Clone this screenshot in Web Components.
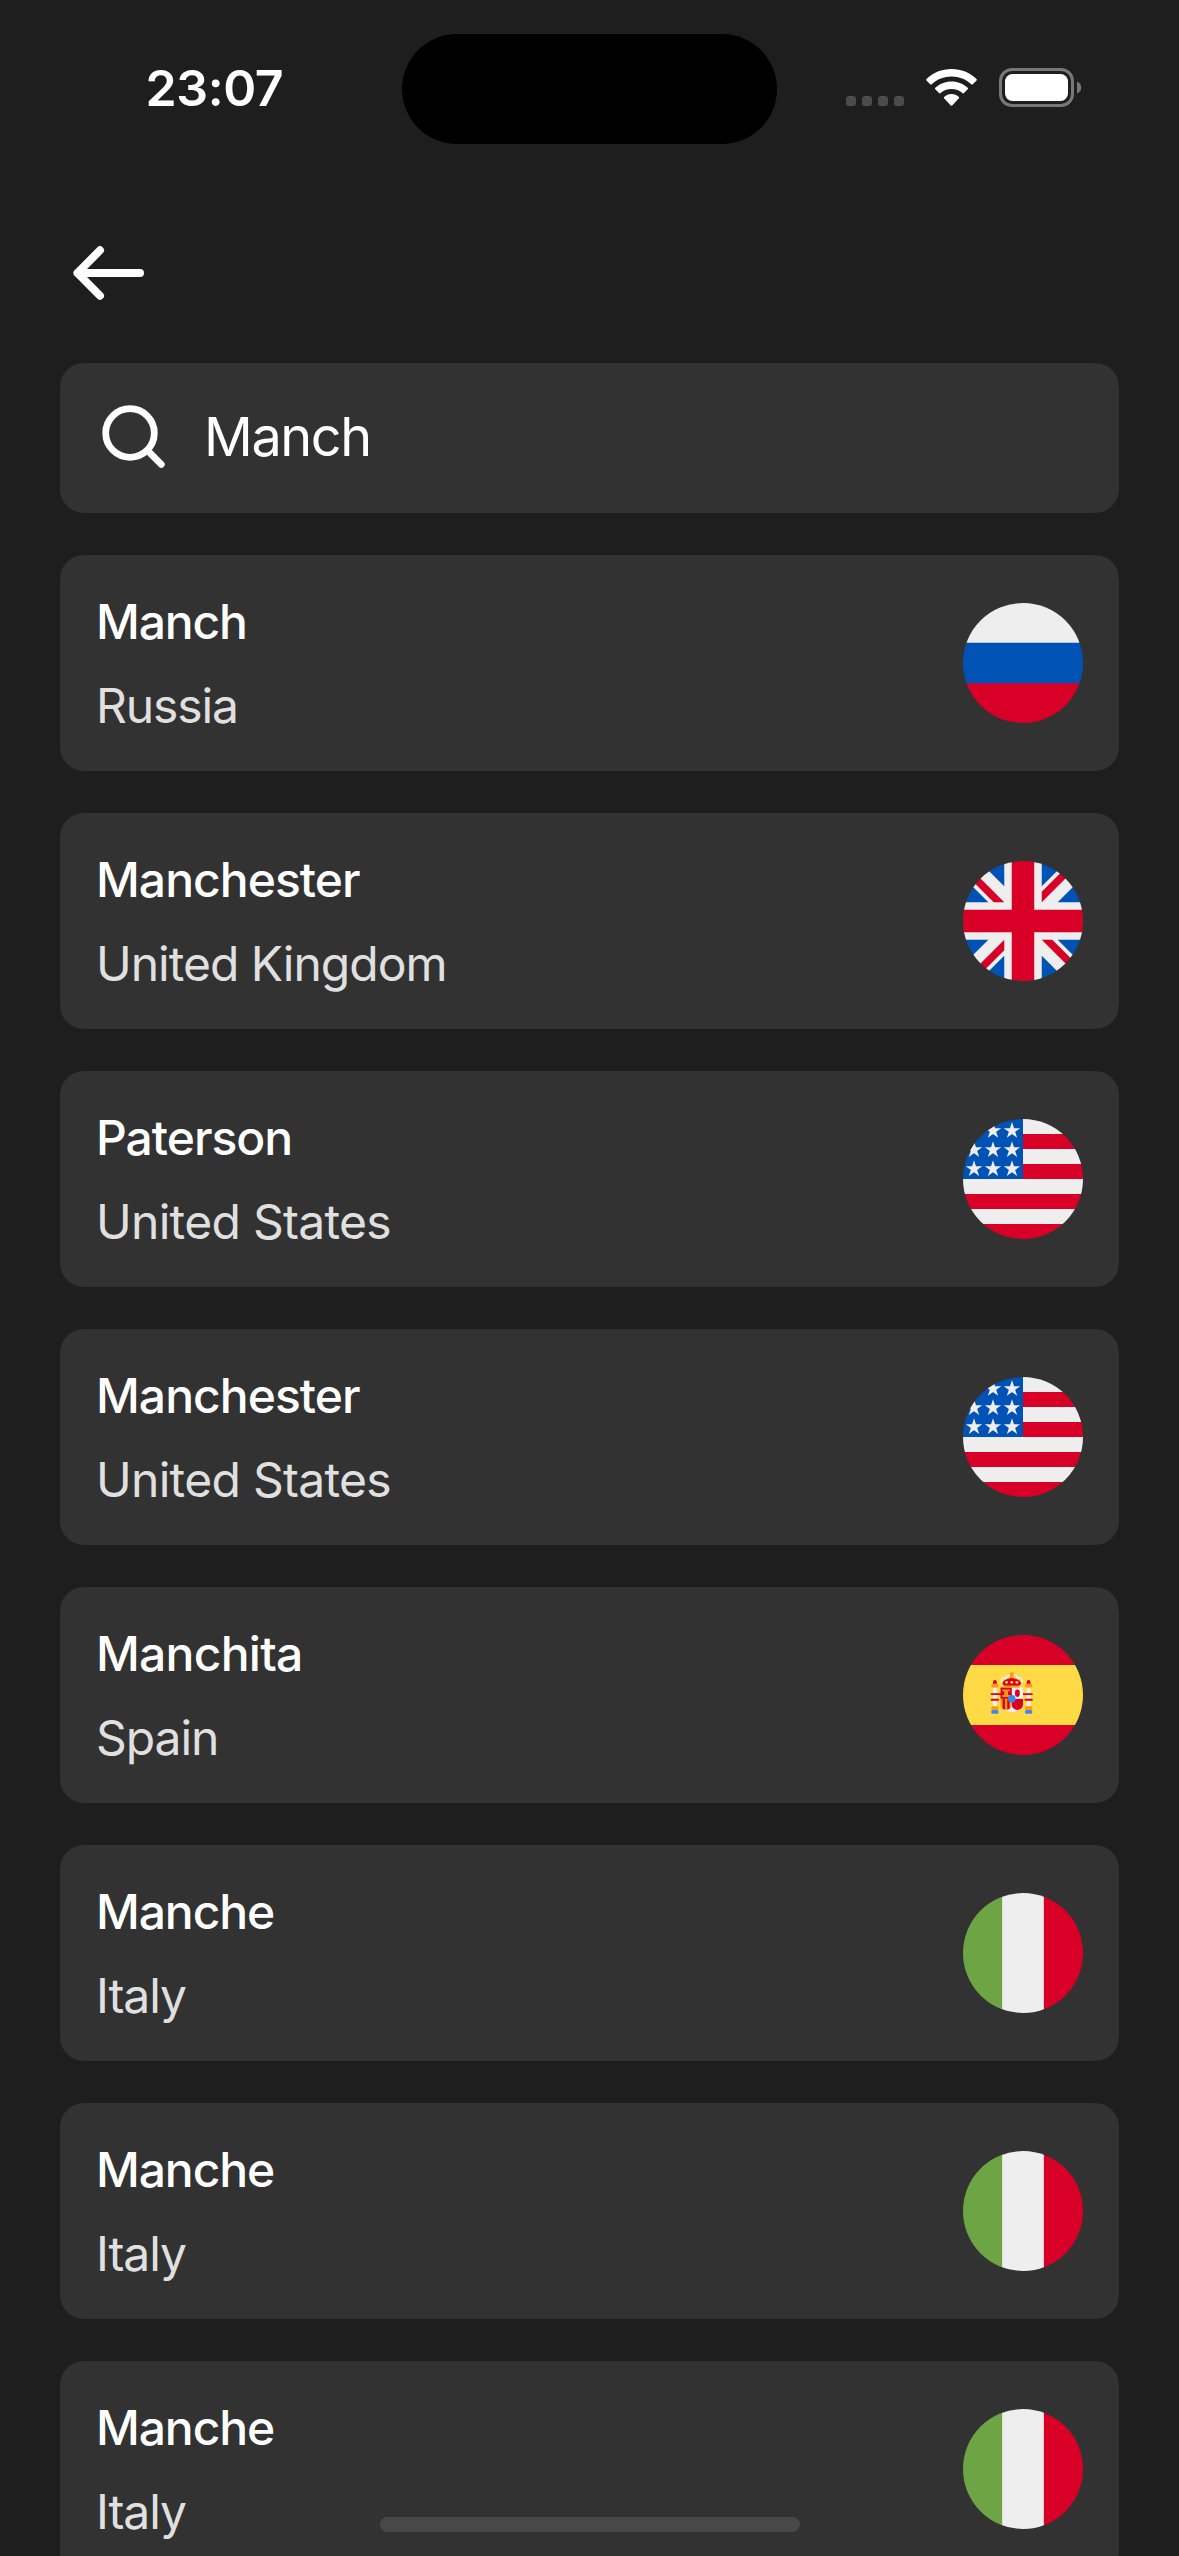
<!DOCTYPE html>
<html lang="en">
<head>
<meta charset="utf-8">
<title>City search</title>
<style>
  html, body { margin: 0; padding: 0; background: #1e1e1e; }
  body { height: 2556px; overflow: hidden; font-family: Inter, "Liberation Sans", sans-serif; color: #fff; }
</style>
</head>
<body>
<city-search-screen></city-search-screen>

<script>
const FLAGS = {
  ru: `<path fill="#0052b4" d="M512 170v172l-256 32L0 342V170l256-32z"/><path fill="#eee" d="M512 0v170H0V0Z"/><path fill="#d80027" d="M512 342v170H0V342Z"/>`,
  it: `<path fill="#eee" d="M167 0h178l25.9 252.3L345 512H167l-29.8-253.4z"/><path fill="#6da544" d="M0 0h167v512H0z"/><path fill="#d80027" d="M345 0h167v512H345z"/>`,
  gb: `<path fill="#eee" d="M0 0h512v512H0z"/><path fill="#0052b4" d="M336 0v108L444 0Zm176 68L404 176h108zM0 176h108L0 68ZM68 0l108 108V0Zm108 512V404L68 512ZM0 444l108-108H0Zm512-108H404l108 108Zm-68 176L336 404v108z"/><path fill="#d80027" d="M0 0v45l131 131h45L0 0zm208 0v208H0v96h208v208h96V304h208v-96H304V0h-96zm259 0L336 131v45L512 0h-45zM176 336 0 512h45l131-131v-45zm160 0 176 176v-45L381 336h-45z"/>`,
  us: `<path fill="#eee" d="M0 0h512v512H0z"/><path fill="#d80027" d="M224 64h288v64H224Zm0 128h288v64H256ZM0 320h512v64H0Zm0 128h512v64H0Z"/><path fill="#0052b4" d="M0 0h256v256H0Z"/><path fill="#eee" d="m187 243 57-41h-70l57 41-22-67zm-81 0 57-41H93l57 41-22-67zm-81 0 57-41H12l57 41-22-67zm162-81 57-41h-70l57 41-22-67zm-81 0 57-41H93l57 41-22-67zm-81 0 57-41H12l57 41-22-67Zm162-82 57-41h-70l57 41-22-67Zm-81 0 57-41H93l57 41-22-67zm-81 0 57-41H12l57 41-22-67Z"/>`,
  es: `<path fill="#ffda44" d="m0 128 256-32 256 32v256l-256 32L0 384Z"/><path fill="#d80027" d="M0 0h512v128H0zm0 384h512v128H0z"/><g fill="#eee"><path d="M144 304h-16v-80h16zm128 0h16v-80h-16z"/><ellipse cx="208" cy="296" rx="48" ry="32"/></g><g fill="#d80027"><rect width="16" height="24" x="128" y="192" rx="8"/><rect width="16" height="24" x="272" y="192" rx="8"/><path d="M208 272v24a24 24 0 0 0 24 24 24 24 0 0 0 24-24v-24h-24z"/></g><g fill="#ff9811"><rect width="32" height="16" x="120" y="208" rx="8"/><rect width="32" height="16" x="264" y="208" rx="8"/><rect width="32" height="16" x="120" y="304" rx="8"/><rect width="32" height="16" x="264" y="304" rx="8"/><path d="M160 272v24c0 8 4 14 9 19l5-6 5 10a21 21 0 0 0 10 0l5-10 5 6c6-5 9-11 9-19v-24h-9l-5 8-5-8h-10l-5 8-5-8z"/></g><path fill="#d80027" d="M122 248a4 4 0 0 0-4 4 4 4 0 0 0 4 4h172a4 4 0 0 0 4-4 4 4 0 0 0-4-4zm0 24a4 4 0 0 0-4 4 4 4 0 0 0 4 4h28a4 4 0 0 0 4-4 4 4 0 0 0-4-4zm144 0a4 4 0 0 0-4 4 4 4 0 0 0 4 4h28a4 4 0 0 0 4-4 4 4 0 0 0-4-4z"/><path fill="#eee" d="M196 168c-7 0-13 5-15 11l-5-1c-9 0-16 7-16 16s7 16 16 16c7 0 13-4 15-11a16 16 0 0 0 17-4 16 16 0 0 0 17 4 16 16 0 1 0 10-20 16 16 0 0 0-27-5c-3-4-7-6-12-6zm0 8c5 0 8 4 8 8 0 5-3 8-8 8-4 0-8-3-8-8 0-4 4-8 8-8zm24 0c5 0 8 4 8 8 0 5-3 8-8 8-4 0-8-3-8-8 0-4 4-8 8-8zm-44 10 4 1 4 8c0 4-4 7-8 7s-8-3-8-8c0-4 4-8 8-8zm64 0c5 0 8 4 8 8 0 5-3 8-8 8-4 0-8-3-8-7l4-8z"/><path fill="#ff9811" d="M200 160h16v32h-16z"/><path fill="#eee" d="M208 224h48v48h-48z"/><path fill="#d80027" d="m248 208-8 8h-64l-8-8c0-13 18-24 40-24s40 11 40 24zm-88 16h48v48h-48z"/><rect width="20" height="32" x="222" y="232" fill="#d80027" rx="10"/><path fill="#ff9811" d="M168 232v8h8v16h-8v8h32v-8h-8v-16h8v-8zm8-16h64v8h-64z"/><g fill="#ffda44"><circle cx="186" cy="202" r="6"/><circle cx="208" cy="202" r="6"/><circle cx="230" cy="202" r="6"/></g><path fill="#d80027" d="M169 272v43a24 24 0 0 0 10 4v-47h-10zm20 0v47a24 24 0 0 0 10-4v-43h-10z"/><g fill="#338af3"><circle cx="208" cy="272" r="16"/><rect width="32" height="16" x="264" y="320" rx="8"/><rect width="32" height="16" x="120" y="320" rx="8"/></g>`
};

function define(name, render) {
  customElements.define(name, class extends HTMLElement {
    connectedCallback() {
      if (!this.shadowRoot) this.attachShadow({ mode: "open" }).innerHTML = render(this);
    }
  });
}

define("country-flag", el => `
  <style>
    :host { display: block; width: 120px; height: 120px; flex: none; }
    svg { display: block; }
  </style>
  <svg width="120" height="120" viewBox="0 0 512 512">
    <mask id="disc"><circle cx="256" cy="256" r="256" fill="#fff"/></mask>
    <g mask="url(#disc)">${FLAGS[el.getAttribute("code")]}</g>
  </svg>`);

define("status-bar", () => `
  <style>
    :host { display: grid; grid-template-columns: 402px 375px 402px; height: 177px; padding-top: 34px; box-sizing: border-box; }
    .time { height: 110px; padding: 0 0 0 145.5px; line-height: 108px; font-size: 50px; font-weight: 600; letter-spacing: -0.4px; }
    .island { height: 110px; border-radius: 55px; background: #000; }
    .icons { display: flex; align-items: flex-end; height: 73px; padding-left: 69px; }
    .dots { display: flex; gap: 6px; margin: 0 22px 1px 0; }
    .dots i { width: 10px; height: 10px; border-radius: 3px; background: #4b4b4b; }
    svg { display: block; }
    .wifi { margin: 0 22px 1px 0; }
  </style>
  <div class="time"><slot></slot></div>
  <div class="island"></div>
  <div class="icons">
    <div class="dots"><i></i><i></i><i></i><i></i></div>
    <svg class="wifi" width="51" height="37" viewBox="0 0 51 37" fill="#fff">
      <path d="M25.5 0C35.2 0 44 3.7 50.5 9.9Q51.2 10.7 50.5 11.5L46.8 15.2Q46 15.8 45.2 15.2C40 10.4 33.1 7.6 25.5 7.6S11 10.4 5.8 15.2Q5 15.8 4.2 15.2L.5 11.5Q-.2 10.7.5 9.9C7 3.7 15.8 0 25.5 0Z"/>
      <path d="M25.5 12.4C31.8 12.4 37.5 14.8 41.7 18.7Q42.5 19.5 41.7 20.3L38 24.1Q37.2 24.8 36.3 24.1C33.5 21.6 29.7 20.1 25.5 20.1S17.5 21.6 14.7 24.1Q13.800 24.8 13 24.1L9.3 20.3Q8.500 19.5 9.3 18.7C13.5 14.8 19.2 12.4 25.5 12.4Z"/>
      <path d="M25.5 25C28.3 25 30.9 26.1 32.9 27.9Q33.5 28.6 32.9 29.3L26.2 36.4Q25.5 37 24.8 36.4L18.100 29.3Q17.5 28.6 18.1 27.9C20.1 26.1 22.7 25 25.5 25Z"/>
    </svg>
    <svg width="83" height="39" viewBox="0 0 83 39">
      <rect x="1.5" y="1.5" width="72" height="36" rx="11.5" fill="none" stroke="#787878" stroke-width="3"/>
      <rect x="6" y="6" width="63" height="27" rx="7.5" fill="#fff"/>
      <path d="M78 13.500C80.600 14.500 82.200 16.700 82.200 19.500S80.600 24.500 78 25.500Z" fill="#787878"/>
    </svg>
  </div>`);

define("back-button", () => `
  <style>
    :host { display: flex; height: 72px; width: 72px; align-items: center; justify-content: center; }
    svg { display: block; }
  </style>
  <svg width="72" height="72" viewBox="0 0 72 72" fill="none" stroke="#fff" stroke-width="8" stroke-linecap="round" stroke-linejoin="round">
    <path d="M68 36H5.500M28 13.300 5.500 36 28 58.700"/>
  </svg>`);

define("search-field", () => `
  <style>
    :host { display: flex; align-items: center; height: 150px; box-sizing: border-box; padding: 0 36px; border-radius: 24px; background: #323232; font-size: 54px; line-height: 66px; letter-spacing: -1.4px; }
    svg { display: block; margin-right: 36px; flex: none; }
    .query { margin-bottom: 2px; }
  </style>
  <svg width="72" height="72" viewBox="0 0 72 72" fill="none" stroke="#fff" stroke-width="6.800" stroke-linecap="round">
    <circle cx="34" cy="31" r="24.300"/><path d="M51.500 48.500 65.300 62.300"/>
  </svg>
  <div class="query"><slot></slot></div>`);

define("city-card", el => `
  <style>
    :host { display: flex; align-items: center; justify-content: space-between; height: 216px; box-sizing: border-box; padding: 36px; border-radius: 24px; background: #323232; }
    .text { display: flex; flex-direction: column; gap: 24px; margin-top: 2px; font-size: 48px; line-height: 60px; }
    .city { font-weight: 500; letter-spacing: var(--city-tracking); }
    .country { color: #e0e0e0; letter-spacing: var(--country-tracking); }
  </style>
  <div class="text">
    <div class="city"><slot></slot></div>
    <div class="country"><slot name="country"></slot></div>
  </div>
  <country-flag code="${el.getAttribute("code")}"></country-flag>`);

define("home-indicator", () => `
  <style>
    :host { display: block; position: absolute; left: 380px; top: 2517px; width: 420px; height: 15px; border-radius: 7.5px; background: #484848; }
  </style>`);

// City, country, flag code, and the letter spacing in px of the two lines.
const CITIES = [
  ["Manch", "Russia", "ru", -1.15, -1.1],
  ["Manchester", "United Kingdom", "gb", -0.96, -1],
  ["Paterson", "United States", "us", -1, -0.7],
  ["Manchester", "United States", "us", -0.96, -0.7],
  ["Manchita", "Spain", "es", -0.74, -1.05],
  ["Manche", "Italy", "it", -1.1, -1.1],
  ["Manche", "Italy", "it", -1.1, -1.1],
  ["Manche", "Italy", "it", -1.1, -1.1]
];

define("city-search-screen", () => `
  <style>
    :host { display: block; position: relative; width: 1179px; height: 2556px; overflow: hidden; background: #1e1e1e; }
    .nav { padding: 60px 72px 54px; }
    main { display: flex; flex-direction: column; gap: 42px; padding: 0 60px; }
  </style>
  <status-bar>23:07</status-bar>
  <div class="nav"><back-button></back-button></div>
  <main>
    <search-field>Manch</search-field>
    ${CITIES.map(([city, country, code, a, b]) =>
      `<city-card code="${code}" style="--city-tracking:${a}px;--country-tracking:${b}px">${city}<span slot="country">${country}</span></city-card>`).join("")}
  </main>
  <home-indicator></home-indicator>`);
</script>
</body>
</html>
